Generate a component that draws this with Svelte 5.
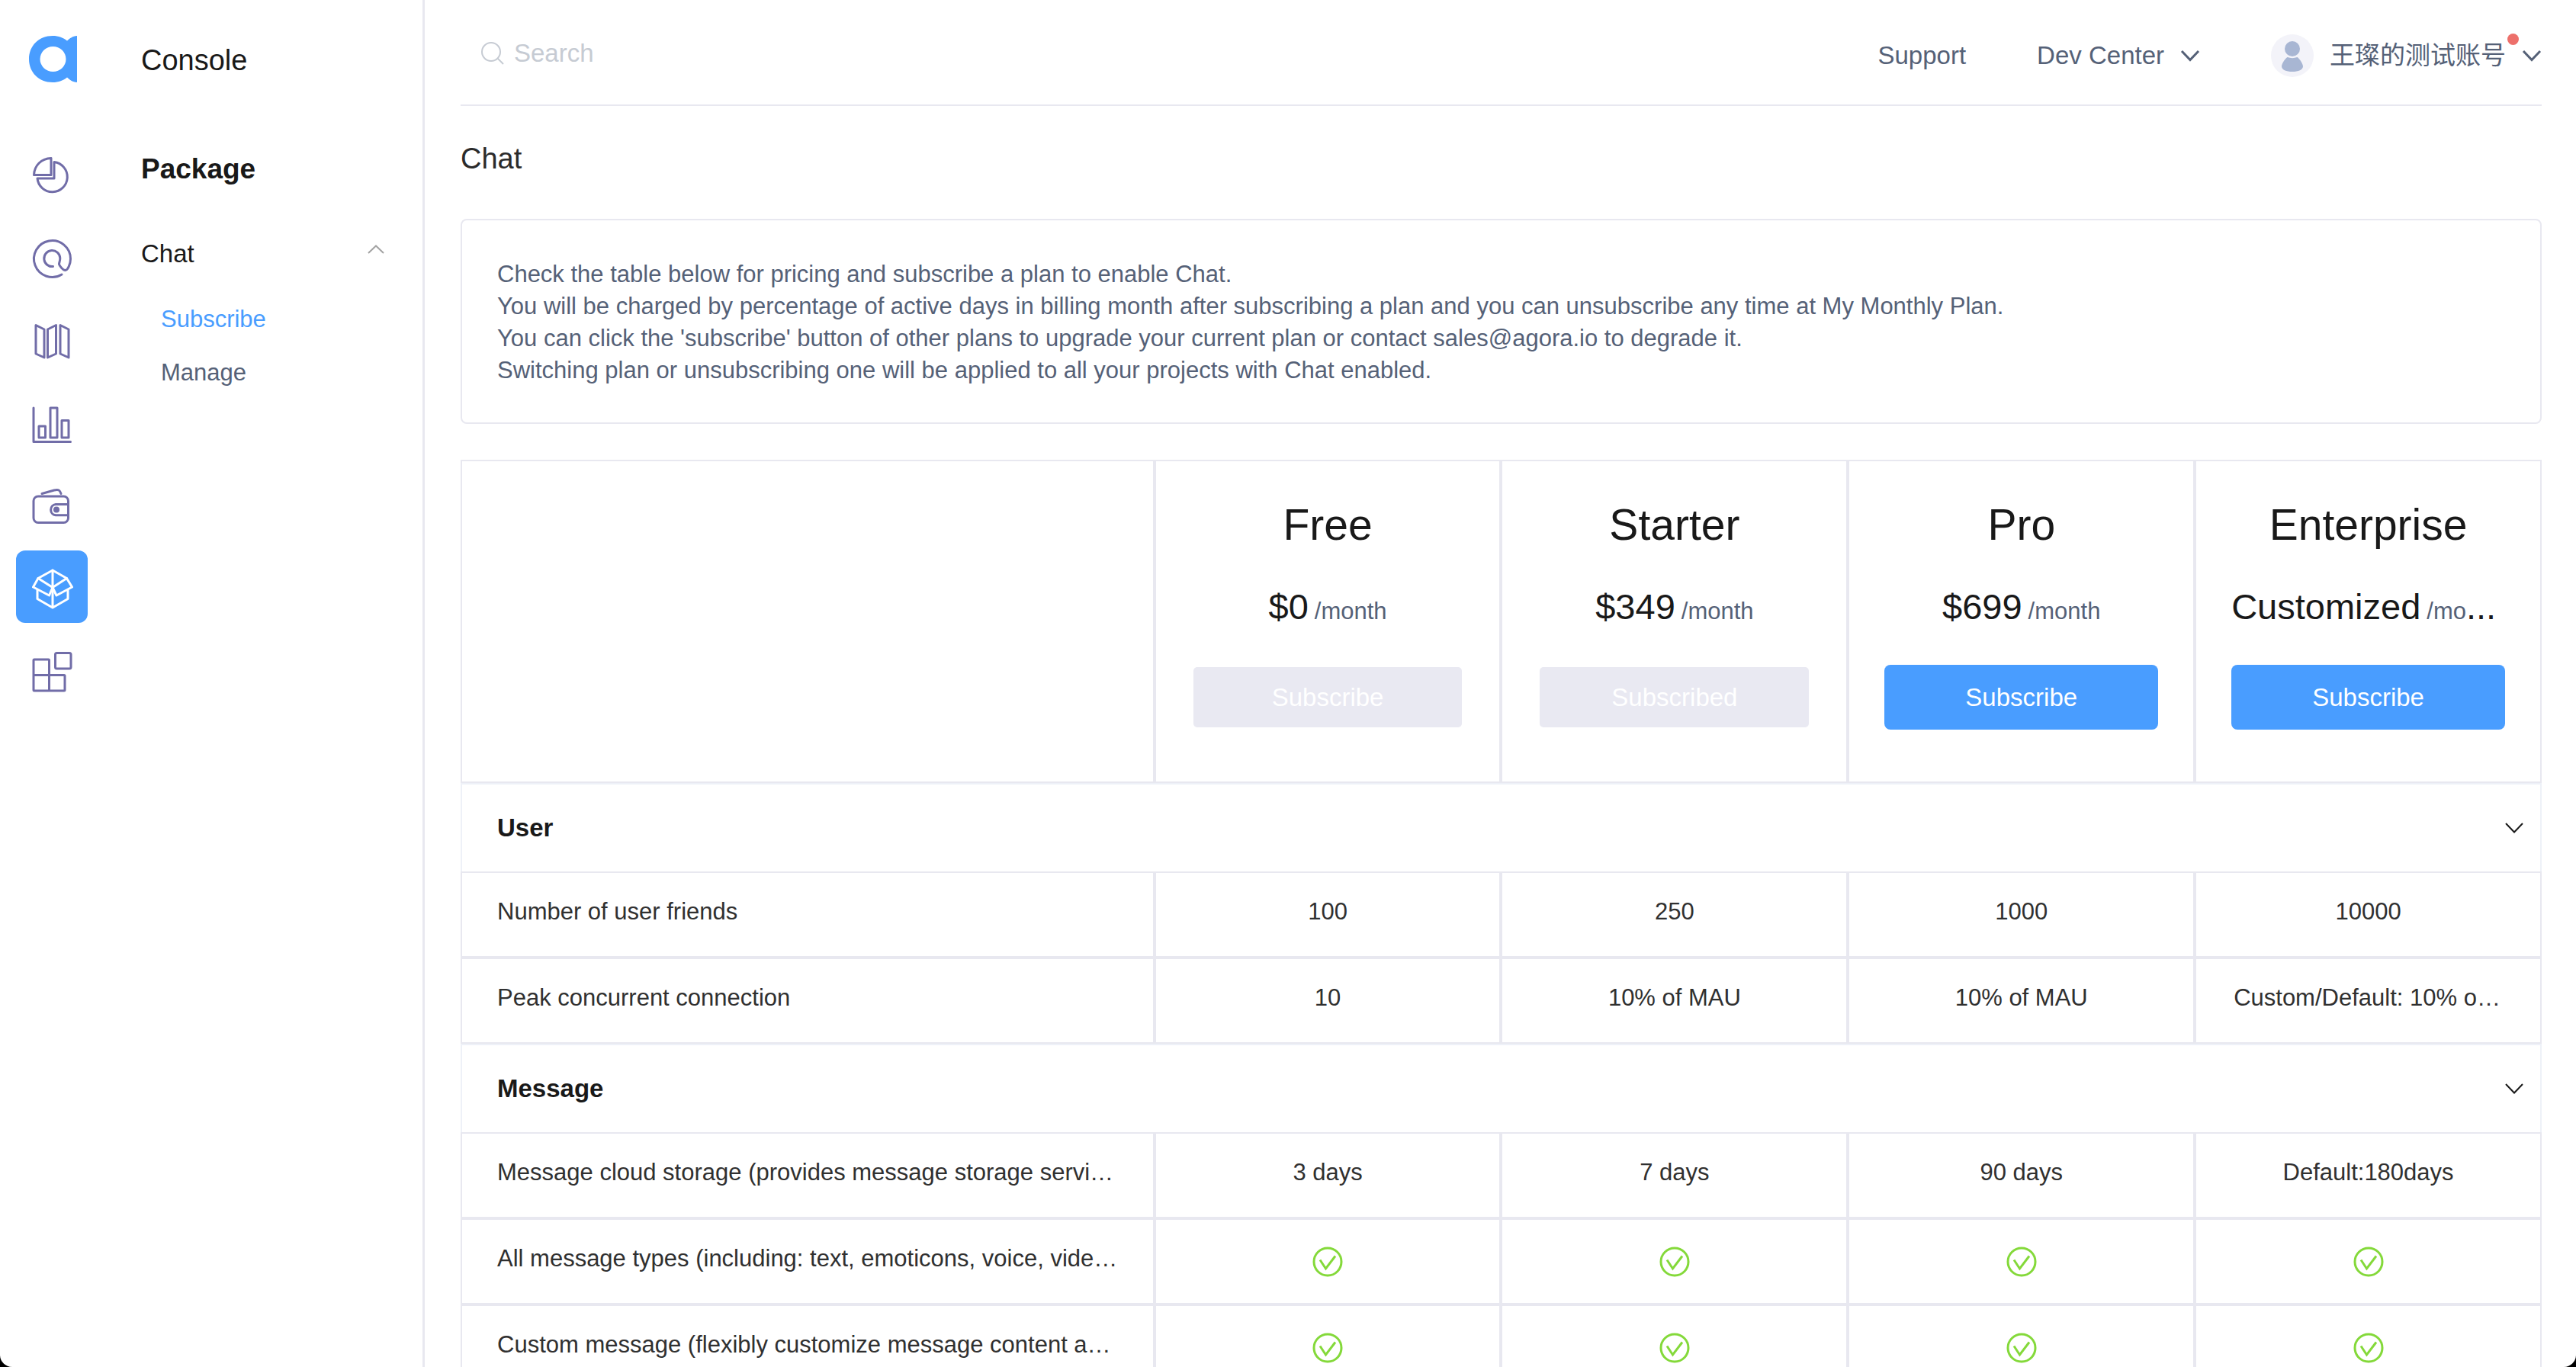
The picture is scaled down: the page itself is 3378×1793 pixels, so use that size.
<script>
  const tools = [
    { id: 'usage', label: 'Usage' },
    { id: 'members', label: 'Members' },
    { id: 'projects', label: 'Projects' },
    { id: 'analytics', label: 'Analytics' },
    { id: 'billing', label: 'Billing' },
    { id: 'package', label: 'Package' },
    { id: 'extensions', label: 'Extensions' }
  ];

  const notice = [
    'Check the table below for pricing and subscribe a plan to enable Chat.',
    'You will be charged by percentage of active days in billing month after subscribing a plan and you can unsubscribe any time at My Monthly Plan.',
    "You can click the 'subscribe' button of other plans to upgrade your current plan or contact sales@agora.io to degrade it.",
    'Switching plan or unsubscribing one will be applied to all your projects with Chat enabled.'
  ];

  const plans = [
    { name: 'Free', price: '$0', period: '/month', action: 'Subscribe', disabled: true },
    { name: 'Starter', price: '$349', period: '/month', action: 'Subscribed', disabled: true },
    { name: 'Pro', price: '$699', period: '/month', action: 'Subscribe', disabled: false },
    { name: 'Enterprise', price: 'Customized', period: '/mo', short: true, action: 'Subscribe', disabled: false }
  ];

  let sections = $state([
    {
      title: 'User',
      open: true,
      rows: [
        { label: 'Number of user friends', values: ['100', '250', '1000', '10000'] },
        { label: 'Peak concurrent connection', values: ['10', '10% of MAU', '10% of MAU', 'Custom/Default: 10% of MAU'] }
      ]
    },
    {
      title: 'Message',
      open: true,
      rows: [
        {
          label: 'Message cloud storage (provides message storage service)',
          values: ['3 days', '7 days', '90 days', 'Default:180days']
        },
        {
          label: 'All message types (including: text, emoticons, voice, videos)',
          values: [true, true, true, true]
        },
        {
          label: 'Custom message (flexibly customize message content and type)',
          values: [true, true, true, true]
        }
      ]
    }
  ]);
</script>

{#snippet chevron()}
  <svg class="chevron" viewBox="0 0 26 16" aria-hidden="true"><path d="M2 2 L13 13.500 L24 2" /></svg>
{/snippet}

<div class="shell">
  <nav class="rail" aria-label="Products">
    <a class="logo" href="#home" aria-label="Home">
      <svg viewBox="0 0 64 62" aria-hidden="true">
        <path fill-rule="evenodd" d="M31 0 C39 0 45 2.500 50 6.500 C54 3 57 .5 63 0 V61 C57 60.500 54 58 50 54.500 C45 58.500 39 61 31 61 C13 61 0 48 0 30.500 C0 13 13 0 31 0 Z M31.500 14 A17 16.500 0 1 0 31.500 47 A17 16.500 0 1 0 31.500 14 Z" />
      </svg>
    </a>
    {#each tools as tool}
      <a class="tool" class:active={tool.id === 'package'} href={'#' + tool.id} aria-label={tool.label}>
        <svg viewBox="0 0 94 95" aria-hidden="true">
          {#if tool.id === 'usage'}
            <path d="M46 30.500 V52.500 H23.500 C24 40 33 31 46 30.500 Z" />
            <path d="M50 35.500 A19.700 19.700 0 1 1 28 57 H50 Z" />
          {:else if tool.id === 'members'}
            <path d="M60 74 A24 24 0 1 1 71.500 53.500 C71.500 60 68 68.500 64.500 68.500 C62 68.500 57 63 56.500 60.500 C56.500 58 57.800 57 57.800 52.500 A10.500 10.500 0 1 0 48.500 63.500" />
          {:else if tool.id === 'projects'}
            <path d="M26 31.500 L37 37 V74 L26 69 Z M41.500 37 L52.500 31.500 V69 L41.500 74 Z M58 31.500 L69 37 V74 L58 69 Z" />
          {:else if tool.id === 'analytics'}
            <path d="M23 31 V75.500 H71.500" />
            <rect x="30" y="55" width="8.500" height="15" />
            <rect x="45" y="31" width="9" height="39" />
            <rect x="60" y="47.500" width="9" height="22.500" />
          {:else if tool.id === 'billing'}
            <rect x="23" y="38" width="45.500" height="34.500" rx="6" />
            <path d="M34 34.500 L50 30 C56 28.500 57.500 30 59 34.500" />
            <path d="M68 48.500 H52 A7.200 7.200 0 0 0 52 62.800 H68" />
            <circle class="dot" cx="53" cy="55.500" r="4" />
          {:else if tool.id === 'package'}
            <path d="M48 26 L29 36.500 L22.500 48 L43.500 59 L48 48.500 L53 59 L73.500 48 L66.500 36.500 Z" />
            <path d="M29 36.500 L48 48.500 L66.500 36.500 M48 26 V75 M28 52 V63.500 L48 75 L68 63.500 V52" />
          {:else}
            <rect x="23" y="34" width="20.500" height="20.500" rx="1" />
            <rect x="23" y="54.500" width="20.500" height="20.500" rx="1" />
            <rect x="43.500" y="54.500" width="20.500" height="20.500" rx="1" />
            <rect x="51.500" y="25.500" width="20.500" height="20.500" rx="2" />
          {/if}
        </svg>
      </a>
    {/each}
  </nav>

  <nav class="menu" aria-label="Package">
    <p class="product">Console</p>
    <h2>Package</h2>
    <button class="group" type="button" aria-expanded="true">
      Chat
      <svg viewBox="0 0 22 12" aria-hidden="true"><path d="M1 11 L11 1.500 L21 11" /></svg>
    </button>
    <a class="current" href="#subscribe" aria-current="page">Subscribe</a>
    <a href="#manage">Manage</a>
  </nav>

  <main>
    <header>
      <label class="search">
        <svg viewBox="0 0 30 30" aria-hidden="true"><circle cx="13" cy="13" r="12" /><path d="M21.500 21.500 L29 29" /></svg>
        <input type="search" placeholder="Search" aria-label="Search" />
      </label>
      <div class="links">
        <a href="#support">Support</a>
        <button type="button">Dev Center {@render chevron()}</button>
        <button class="account" type="button">
          <svg class="avatar" viewBox="0 0 56 56" aria-hidden="true">
            <circle class="disc" cx="28" cy="28" r="28" />
            <circle cx="28" cy="19" r="10" />
            <path d="M21.500 30 C25.500 31.500 30.500 31.500 34.500 30 C38 32.500 42 39 42 42 C42 46.500 36 49 28 49 C20 49 14 46.500 14 42 C14 39 18 32.500 21.500 30 Z" />
          </svg>
          <span class="name">王璨的测试账号</span>
          {@render chevron()}
        </button>
      </div>
    </header>

    <h1>Chat</h1>

    <section class="notice">
      {#each notice as line}
        <p>{line}</p>
      {/each}
    </section>

    <table>
      <thead>
        <tr>
          <td class="corner"></td>
          {#each plans as plan}
            <th class="plan" scope="col">
              <div class="title">{plan.name}</div>
              <div class="price" class:short={plan.short}>{plan.price}<small>{plan.period}</small>{plan.short ? '...' : ''}</div>
              <button type="button" disabled={plan.disabled}>{plan.action}</button>
            </th>
          {/each}
        </tr>
      </thead>
      {#each sections as section}
        <tbody>
          <tr>
            <th class="section" colspan="5" scope="rowgroup">
              <button type="button" aria-expanded={section.open} onclick={() => (section.open = !section.open)}>
                {section.title}
                {@render chevron()}
              </button>
            </th>
          </tr>
          {#if section.open}
            {#each section.rows as row}
              <tr>
                <th class="label" scope="row">{row.label}</th>
                {#each row.values as value}
                  {#if value === true}
                    <td class="check">
                      <svg viewBox="0 0 42 42" role="img" aria-label="Included">
                        <circle cx="21" cy="21" r="18" />
                        <path d="M11 18.500 L18.500 30 L31 13.500" />
                      </svg>
                    </td>
                  {:else}
                    <td>{value}</td>
                  {/if}
                {/each}
              </tr>
            {/each}
          {/if}
        </tbody>
      {/each}
    </table>
  </main>
</div>

<style>
  :global(body) {
    background: #000;
  }

  .shell {
    --line: #e8e8f0;
    --soft: #eef1f8;
    --blue: #499dff;
    --slate: #556177;
    --ink: #191919;
    display: flex;
    box-sizing: border-box;
    height: 100vh;
    overflow: hidden;
    background: #fff;
    border-radius: 0 0 16px 16px;
    color: var(--ink);
    font: 31px/42px "Liberation Sans", "Noto Sans CJK SC", Arial, sans-serif;
  }

  h1, h2, p {
    margin: 0;
  }

  a {
    color: inherit;
    text-decoration: none;
  }

  button {
    padding: 0;
    border: 0;
    background: none;
    color: inherit;
    font: inherit;
    cursor: pointer;
  }

  svg {
    display: block;
    flex: none;
    fill: none;
    stroke: currentColor;
    stroke-width: 3;
  }

  .chevron {
    width: 26px;
    height: 16px;
  }

  /* Icon rail */
  .rail {
    display: flex;
    flex: none;
    flex-direction: column;
    gap: 14px;
    padding: 47px 21px 0;
  }

  .logo {
    margin: 0 0 54px 17px;
  }

  .logo svg {
    width: 64px;
    height: 62px;
    fill: var(--blue);
    stroke: none;
  }

  .tool {
    border-radius: 12px;
    color: #716da8;
  }

  .tool svg {
    width: 94px;
    height: 95px;
    stroke-linecap: round;
    stroke-linejoin: round;
  }

  .tool .dot {
    fill: currentColor;
    stroke: none;
  }

  .tool.active {
    background: var(--blue);
    color: #fff;
  }

  /* Product menu */
  .menu {
    display: flex;
    flex: none;
    flex-direction: column;
    box-sizing: border-box;
    width: 421px;
    padding: 57px 50px 0 49px;
    border-right: 3px solid var(--line);
    color: var(--slate);
  }

  .product, h2 {
    color: var(--ink);
    font-size: 38px;
    line-height: 44px;
  }

  h2 {
    margin: 99px 0 69px;
    font-size: 37px;
  }

  .group {
    display: flex;
    justify-content: space-between;
    margin-bottom: 45px;
    color: var(--ink);
    font-size: 33px;
    line-height: 40px;
  }

  .group svg {
    width: 22px;
    height: 12px;
    margin-top: 8px;
    stroke: #a3a3a3;
    stroke-width: 2;
  }

  .menu a {
    margin: 0 0 28px 26px;
  }

  .menu .current {
    color: var(--blue);
  }

  /* Page */
  main {
    flex: 1;
    min-width: 0;
    padding: 0 45px 0 47px;
    overflow-y: auto;
    scrollbar-width: none;
  }

  header {
    display: flex;
    align-items: center;
    justify-content: space-between;
    height: 137px;
    border-bottom: 2px solid var(--line);
    color: var(--slate);
    font-size: 33px;
  }

  .search {
    display: flex;
    align-items: center;
    gap: 13px;
    padding: 2px 0 0 27px;
    color: #c6cbd3;
  }

  .search svg {
    width: 30px;
    height: 30px;
    stroke-width: 2;
  }

  .search input {
    width: 600px;
    padding: 0;
    border: 0;
    outline: 0;
    background: none;
    color: var(--slate);
    font: inherit;
  }

  .search input::placeholder {
    color: #c6cbd3;
    opacity: 1;
  }

  .links {
    display: flex;
    align-items: center;
    gap: 93px;
    padding-top: 8px;
  }

  .links button {
    display: flex;
    align-items: center;
    gap: 21px;
  }

  .avatar {
    width: 56px;
    height: 56px;
    fill: #a8b6d3;
    stroke: none;
  }

  .disc {
    fill: #f3f3f9;
  }

  .name {
    position: relative;
  }

  .name::after {
    position: absolute;
    top: -8px;
    right: -17px;
    width: 15px;
    height: 15px;
    border-radius: 50%;
    background: #ed706b;
    content: "";
  }

  h1 {
    margin: 47px 0 57px;
    color: #2b2b2b;
    font-size: 38px;
    font-weight: 400;
    line-height: 44px;
  }

  .notice {
    margin-bottom: 47px;
    padding: 50px 46px 47px;
    border: 2px solid var(--line);
    border-radius: 8px;
    color: var(--slate);
  }

  /* Pricing table */
  table {
    width: 100%;
    border-spacing: 0;
    table-layout: fixed;
  }

  td, th {
    padding: 30px 49px 37px;
    overflow: hidden;
    border: 2px solid var(--line);
    color: #303030;
    font-weight: 400;
    text-align: center;
    text-overflow: ellipsis;
    vertical-align: top;
    white-space: nowrap;
  }

  .corner {
    width: 33.333%;
    box-sizing: border-box;
  }

  .label {
    padding-right: 46px;
    padding-left: 46px;
    text-align: left;
  }

  .plan {
    padding: 51px 46px 68px;
    color: var(--ink);
  }

  .title {
    margin-bottom: 50px;
    font-size: 57px;
    line-height: 64px;
  }

  .price {
    margin-bottom: 50px;
    font-size: 47px;
    line-height: 52px;
  }

  .price small {
    margin-left: 8px;
    color: var(--slate);
    font-size: 31px;
    line-height: 1;
  }

  .short {
    text-align: left;
  }

  .plan button {
    display: block;
    box-sizing: border-box;
    width: 100%;
    height: 85px;
    border-radius: 8px;
    background: var(--blue);
    color: #fff;
    font-size: 33px;
  }

  .plan button:disabled {
    border: 3px solid transparent;
    background: #e9e9f2 padding-box;
    cursor: default;
  }

  .section {
    padding: 0;
    border-color: var(--soft);
    border-bottom: 0;
  }

  .section button {
    display: flex;
    align-items: center;
    justify-content: space-between;
    box-sizing: border-box;
    width: 100%;
    padding: 36px 21px 36px 46px;
    color: var(--ink);
    font-size: 33px;
    font-weight: 700;
  }

  .section .chevron {
    stroke-width: 2;
  }

  .check {
    padding: 34px 0 33px;
  }

  .check svg {
    width: 42px;
    height: 42px;
    margin: 0 auto;
    stroke: #84d93a;
  }
</style>
